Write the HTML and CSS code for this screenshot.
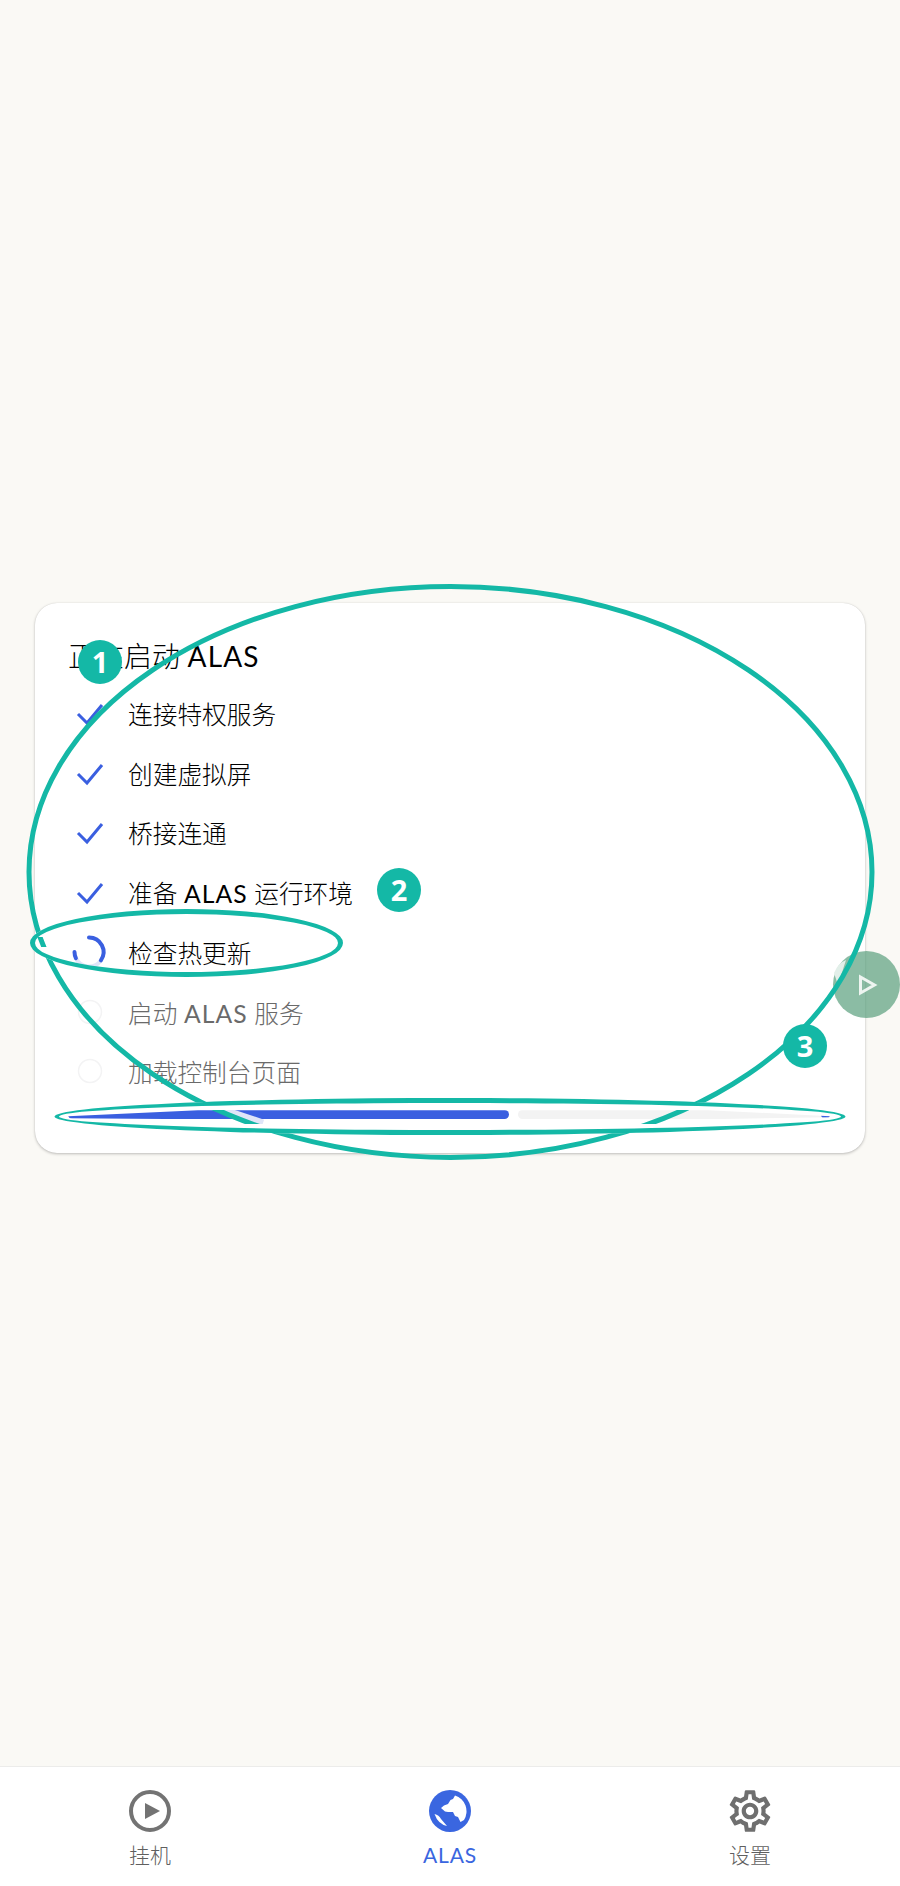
FILE: index.html
```html
<!DOCTYPE html>
<html lang="zh-CN">
<head>
<meta charset="utf-8">
<title>ALAS</title>
<link rel="stylesheet" href="styles.css">
</head>
<body>
<div class="app">
  <main class="main">
    <section class="card">
      <h1 class="title">正在启动 <span class="latin">ALAS</span></h1>
      <ul class="steps">
        <li class="step"><svg class="step-icon" viewBox="0 0 26 26"><path class="check" d="M1 14 10 23 25 5"/></svg><span>连接特权服务</span></li>
        <li class="step"><svg class="step-icon" viewBox="0 0 26 26"><path class="check" d="M1 14 10 23 25 5"/></svg><span>创建虚拟屏</span></li>
        <li class="step"><svg class="step-icon" viewBox="0 0 26 26"><path class="check" d="M1 14 10 23 25 5"/></svg><span>桥接连通</span></li>
        <li class="step"><svg class="step-icon" viewBox="0 0 26 26"><path class="check" d="M1 14 10 23 25 5"/></svg><span>准备 <span class="latin">ALAS</span> 运行环境</span></li>
        <li class="step"><svg class="step-icon" viewBox="0 0 26 26"><path class="spin-track" d="M23.900 21.300A14.500 14.500 0 0 1-1.100 19.100"/><path class="spin-arc" d="M12-1.500A14.500 14.500 0 0 1 23.900 21.300M-2.500 13A14.500 14.500 0 0 0-1.100 19.100"/></svg><span>检查热更新</span></li>
        <li class="step pending"><svg class="step-icon" viewBox="0 0 26 26"><circle class="ring" cx="13" cy="13" r="11.500"/></svg><span>启动 <span class="latin">ALAS</span> 服务</span></li>
        <li class="step pending"><svg class="step-icon" viewBox="0 0 26 26"><circle class="ring" cx="13" cy="13" r="11.500"/></svg><span>加载控制台页面</span></li>
      </ul>
      <div class="progress">
        <div class="progress-fill"></div>
        <div class="progress-track"></div>
        <div class="progress-stop"></div>
      </div>
    </section>
  </main>
  <nav class="nav">
    <div class="nav-item">
      <svg class="nav-icon" viewBox="0 0 50 50"><circle class="play-ring" cx="25" cy="25" r="19"/><path class="play-tri" d="M20 17 35 25 20 33Z"/></svg>
      <span>挂机</span>
    </div>
    <div class="nav-item active">
      <svg class="nav-icon" viewBox="-25 -25 50 50"><circle class="globe" r="21"/><path class="land" d="M-9-3-6-5.500-2-7 .5-11 3-12 5-15.500A16.500 16.500 0 0 1 14 9L10.500 11 8 6 5 5 3 1-2 1-5 .5Z"/><path class="land" d="M-15.500 3Q-11 4-9 8L-3 15Q-12 13-15.500 3Z"/></svg>
      <span class="latin">ALAS</span>
    </div>
    <div class="nav-item">
      <svg class="nav-icon" viewBox="0 0 24 24"><path class="gear" d="M19.43 12.98c.04-.32.07-.64.07-.98 0-.34-.03-.66-.07-.98l2.11-1.65c.19-.15.24-.42.12-.64l-2-3.46c-.09-.16-.26-.25-.44-.25-.06 0-.12.01-.17.03l-2.49 1c-.52-.4-1.08-.73-1.69-.98l-.38-2.65C14.46 2.18 14.25 2 14 2h-4c-.25 0-.46.18-.49.42l-.38 2.65c-.61.25-1.17.59-1.69.98l-2.49-1c-.06-.02-.12-.03-.18-.03-.17 0-.34.09-.43.25l-2 3.46c-.13.22-.07.49.12.64l2.11 1.65c-.04.32-.07.65-.07.98 0 .33.03.66.07.98l-2.11 1.65c-.19.15-.24.42-.12.64l2 3.46c.09.16.26.25.44.25.06 0 .12-.01.17-.03l2.49-1c.52.4 1.08.73 1.69.98l.38 2.65c.03.24.24.42.49.42h4c.25 0 .46-.18.49-.42l.38-2.65c.61-.25 1.17-.59 1.69-.98l2.49 1c.06.02.12.03.18.03.17 0 .34-.09.43-.25l2-3.46c.12-.22.07-.49-.12-.64l-2.11-1.65zm-1.98-1.71c.04.31.05.52.05.73 0 .21-.02.43-.05.73l-.14 1.13.89.7 1.08.84-.7 1.21-1.27-.51-1.04-.42-.9.68c-.43.32-.84.56-1.25.73l-1.06.43-.16 1.13-.2 1.35h-1.4l-.19-1.35-.16-1.13-1.06-.43c-.43-.18-.83-.41-1.23-.71l-.91-.7-1.06.43-1.27.51-.7-1.21 1.08-.84.89-.7-.14-1.13c-.03-.31-.05-.54-.05-.74s.02-.43.05-.73l.14-1.13-.89-.7-1.08-.84.7-1.21 1.27.51 1.04.42.9-.68c.43-.32.84-.56 1.25-.73l1.06-.43.16-1.13.2-1.35h1.39l.19 1.35.16 1.13 1.06.43c.43.18.83.41 1.23.71l.91.7 1.06-.43 1.27-.51.7 1.21-1.07.85-.89.7.14 1.13zM12 8c-2.21 0-4 1.79-4 4s1.790 4 4 4 4-1.790 4-4-1.790-4-4-4zm0 6c-1.100 0-2-.9-2-2s.9-2 2-2 2 .9 2 2-.9 2-2 2z"/></svg>
      <span>设置</span>
    </div>
  </nav>

  <div class="fab"><svg class="fab-icon" viewBox="0 0 20 22"><path d="M2.500 3 16.500 11 2.500 19Z"/></svg></div>

  <svg class="marks" viewBox="0 0 900 1886">
    <defs>
      <clipPath id="bigclip">
        <path clip-rule="evenodd" d="M0 0H900V1886H0Z M54.500 1116.500A395.500 18.500 0 1 0 845.500 1116.500A395.500 18.500 0 1 0 54.500 1116.500Z M0 1110H900V1124H0Z M30 943A156.500 34 0 1 0 343 943A156.500 34 0 1 0 30 943Z M30 937H60V947H30Z"/>
      </clipPath>
    </defs>
    <path class="halo" d="M834 973Q838 963 846 960L838 985Z"/>
    <g clip-path="url(#bigclip)">
      <path class="lilac" d="M224 1110 L263 1123" />
      <ellipse class="big" cx="450.500" cy="872" rx="421.500" ry="285.500"/>
    </g>
    <path class="thin" fill-rule="evenodd" d="M30 943A156.500 34 0 1 0 343 943A156.500 34 0 1 0 30 943ZM35 943A151.500 29 0 1 1 338 943A151.500 29 0 1 1 35 943Z"/>
    <path class="thin" fill-rule="evenodd" d="M54.500 1116.500A395.500 18.500 0 1 0 845.500 1116.500A395.500 18.500 0 1 0 54.500 1116.500ZM59 1116.500A391 13.500 0 1 1 841 1116.500A391 13.500 0 1 1 59 1116.500Z"/>
  </svg>
  <div class="badge badge-1">1</div>
  <div class="badge badge-2">2</div>
  <div class="badge badge-3">3</div>
</div>
</body>
</html>
```
FILE: styles.css
```css
* { box-sizing: border-box; }
html, body { margin: 0; padding: 0; }
body {
  font-family: "Lato", "Noto Sans CJK SC", "Noto Sans", sans-serif;
  font-weight: 300;
  background: #faf9f5;
  color: #1f1f1f;
}
.app {
  position: relative;
  width: 900px;
  height: 1886px;
  display: flex;
  flex-direction: column;
  overflow: hidden;
}
.main {
  flex: 1;
  display: flex;
  align-items: center;
  justify-content: center;
  padding-bottom: 10px;
}
.card {
  width: 830px;
  background: #fff;
  border-radius: 22px;
  padding: 35px 35px 34px;
  box-shadow: 0 1px 3px rgba(0, 0, 0, .24), 0 0 1px rgba(0, 0, 0, .14);
}
.latin {
  font-weight: 400;
  letter-spacing: .04em;
}
.title {
  margin: 0 0 9px -2px;
  font-size: 28px;
  line-height: 36px;
  font-weight: 300;
  color: #000;
}
.steps {
  list-style: none;
  margin: 0;
  padding: 0 0 0 7px;
}
.step {
  height: 59.75px;
  display: flex;
  align-items: center;
  gap: 25px;
  font-size: 24.7px;
  color: #000;
}
.step.pending { color: #6a6a6a; }
.step-icon {
  width: 26px;
  height: 26px;
  flex: none;
  overflow: visible;
}
.check {
  fill: none;
  stroke: #3a5fe0;
  stroke-width: 3;
}
.spin-arc {
  fill: none;
  stroke: #3a5fe0;
  stroke-width: 4;
  stroke-linecap: round;
}
.spin-track {
  fill: none;
  stroke: #dfe5f8;
  stroke-width: 4;
}
.ring {
  fill: none;
  stroke: #f3f3f4;
  stroke-width: 1.5;
}
.progress {
  position: relative;
  display: flex;
  gap: 9px;
  height: 9px;
  width: 762px;
  margin: 9px 0 0 -2px;
  clip-path: polygon(0 6px, 130px 0, 640px 0, 762px 6px, 762px 7px, 640px 9px, 130px 9px, 0 8px);
}
.progress-fill {
  width: 441px;
  background: #3a5fe0;
  border-radius: 4.5px;
}
.progress-track {
  flex: 1;
  background: #f3f3f3;
  border-radius: 4.5px;
}
.progress-stop {
  position: absolute;
  right: 0;
  top: 0;
  width: 9px;
  height: 9px;
  border-radius: 50%;
  background: #3a5fe0;
}
.nav {
  height: 120px;
  flex: none;
  display: flex;
  background: #fff;
  border-top: 1px solid #ececea;
}
.nav-item {
  flex: 1;
  display: flex;
  flex-direction: column;
  align-items: center;
  padding-top: 19px;
  font-size: 21px;
  line-height: 26px;
  color: #5f5f5f;
}
.nav-item.active { color: #3a66e0; }
.nav-icon {
  width: 50px;
  height: 50px;
  margin-bottom: 6px;
}
.play-ring {
  fill: none;
  stroke: #737373;
  stroke-width: 4;
}
.play-tri { fill: #737373; }
.globe { fill: #3a66e0; }
.land { fill: #fff; }
.gear { fill: #6f6f6f; }
.fab {
  position: absolute;
  left: 833px;
  top: 951px;
  width: 67px;
  height: 67px;
  border-radius: 50%;
  background: rgba(90, 160, 125, .7);
  display: flex;
  align-items: center;
  justify-content: center;
}
.fab-icon {
  width: 20px;
  height: 22px;
  margin-left: 3px;
  overflow: visible;
}
.fab-icon path {
  fill: none;
  stroke: #eef5f1;
  stroke-width: 3;
}
.marks {
  position: absolute;
  left: 0;
  top: 0;
  width: 900px;
  height: 1886px;
  pointer-events: none;
}
.big {
  fill: none;
  stroke: #14b8a6;
  stroke-width: 5;
}
.thin { fill: #14b8a6; }
.lilac {
  fill: none;
  stroke: #dfe5f8;
  stroke-width: 7;
}
.halo { fill: #e2efe9; }
.badge {
  position: absolute;
  width: 44px;
  height: 44px;
  border-radius: 50%;
  background: #14b8a6;
  color: #fff;
  font-family: "Open Sans", sans-serif;
  font-size: 29px;
  font-weight: 700;
  line-height: 44px;
  text-align: center;
}
.badge-1 { left: 78px; top: 640px; }
.badge-2 { left: 377px; top: 868px; }
.badge-3 { left: 783px; top: 1024px; }
```
